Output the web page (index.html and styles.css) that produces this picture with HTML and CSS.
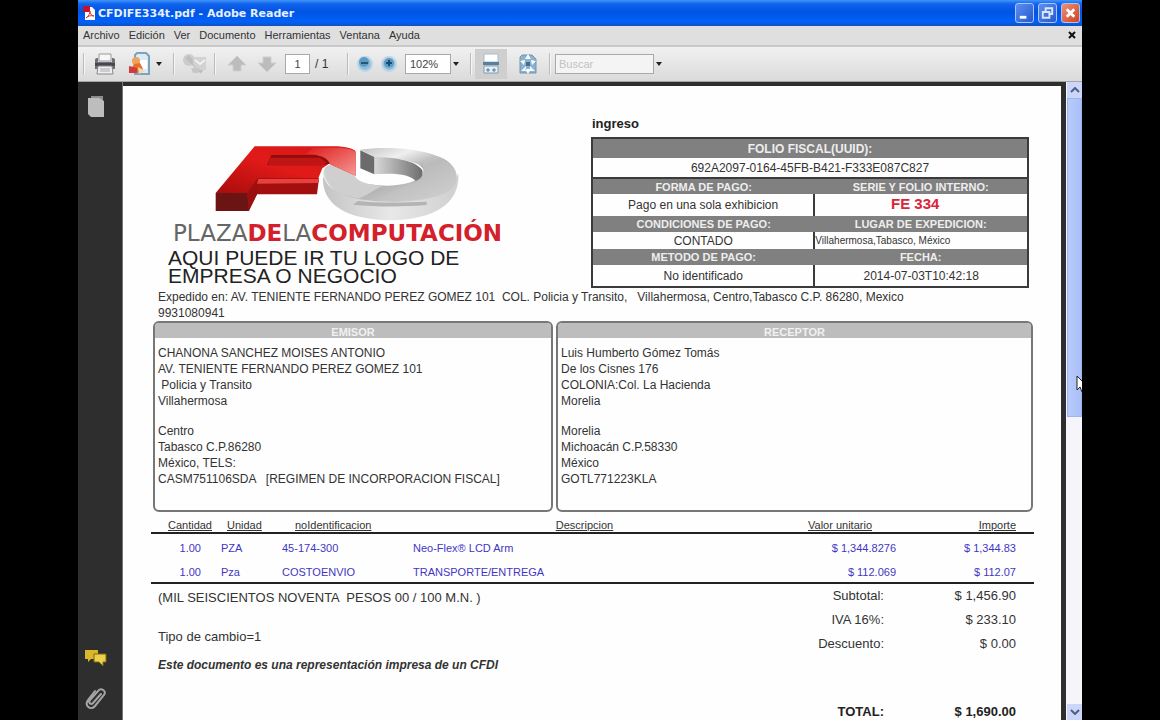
FILE: index.html
```html
<!doctype html>
<html lang="es">
<head>
<title>CFDIFE334t.pdf - Adobe Reader</title>
<meta charset="UTF-8">
<meta name="viewport" content="width=device-width, initial-scale=1.0">
<link rel="stylesheet" href="styles.css">
</head>
<body>

<div class="window">

  <header class="titlebar">
    <svg class="app-icon" width="13" height="15" viewBox="0 0 13 15">
      <path d="M2 1h7l3 3v10H2z" fill="#fff"/>
      <path d="M0 0h7v6H0z" fill="#c4122c"/>
      <path d="M3 12c3-2 4-5 4-7c0 3 2 5 4 5c-3-1-6 0-8 2z" fill="none" stroke="#d33" stroke-width="1"/>
    </svg>
    <span class="title">CFDIFE334t.pdf - Adobe Reader</span>
    <div class="win-buttons">
      <button type="button" aria-label="Minimizar">
        <svg width="18" height="18" viewBox="0 0 18 18"><path d="M4 12h7v3H4z" fill="#fff"/></svg>
      </button>
      <button type="button" aria-label="Restaurar">
        <svg width="18" height="18" viewBox="0 0 18 18" fill="none" stroke="#dbe6ff" stroke-width="2"><path d="M7 7V4h7v6h-3M4 8h7v6H4z"/></svg>
      </button>
      <button type="button" class="close" aria-label="Cerrar">
        <svg width="18" height="18" viewBox="0 0 18 18" stroke="#fff" stroke-width="3"><path d="M5 5l8 8M13 5l-8 8"/></svg>
      </button>
    </div>
  </header>

  <nav class="menubar">
    <button type="button">Archivo</button>
    <button type="button">Edición</button>
    <button type="button">Ver</button>
    <button type="button">Documento</button>
    <button type="button">Herramientas</button>
    <button type="button">Ventana</button>
    <button type="button">Ayuda</button>
    <button type="button" class="doc-close" aria-label="Cerrar documento">
      <svg width="8" height="8" viewBox="0 0 8 8" stroke="#111" stroke-width="2"><path d="M1 1l6 6M7 1l-6 6"/></svg>
    </button>
  </nav>

  <div class="toolbar">
    <span class="sep"></span>
    <button type="button" class="tool wide" aria-label="Imprimir">
      <svg width="24" height="24" viewBox="0 0 24 24">
        <path d="M6 2h12v7H6z" fill="#f7f7f7" stroke="#999"/>
        <path d="M2 8q0-2 2-2h1v4h14V6h1q2 0 2 2v9H2z" fill="#6d7177"/>
        <path d="M2 11h20v3H2z" fill="#45494f"/>
        <path d="M5 14h14l1 8H4z" fill="#eee" stroke="#888"/>
        <path d="M7 17h10M7 19h10" stroke="#aaa"/>
      </svg>
    </button>
    <button type="button" class="tool" aria-label="Colaborar">
      <svg width="24" height="24" viewBox="0 0 24 24">
        <path d="M9 1h9l3 3v18H7V3z" fill="#dcebf5" stroke="#7ba3bd" stroke-width="2"/>
        <path d="M11 8h8v9h-8z" fill="#fff"/>
        <circle cx="8" cy="9" r="4" fill="#f0a35e"/>
        <path d="M2 19l4-7l6-1l3 6l-5 4z" fill="#e3702f"/>
        <path d="M1 14l8 2v5H1z" fill="#d23a40"/>
        <path d="M10 15l7 4l-6 3z" fill="#f4d7b4"/>
      </svg>
    </button>
    <svg class="caret" width="6" height="4" viewBox="0 0 6 4"><path d="M0 0h6L3 4z"/></svg>
    <span class="sep far"></span>
    <button type="button" class="tool wide" aria-label="Firmar" disabled>
      <svg width="26" height="24" viewBox="0 0 26 24">
        <circle cx="7" cy="8" r="6" fill="#ccc"/>
        <path d="M5 5l15 15" stroke="#bdbdbd" stroke-width="4"/>
        <path d="M11 5h13v13h-8l-5-6z" fill="#d2d2d2"/>
        <path d="M13 8l5 4l5-4" fill="none" stroke="#f2f2f2" stroke-width="2"/>
        <path d="M9 16h9l-2 5h-5z" fill="#c6c6c6"/>
      </svg>
    </button>
    <span class="sep"></span>
    <button type="button" class="tool page-nav" aria-label="Página anterior" disabled>
      <svg width="20" height="18" viewBox="0 0 20 18"><path d="M10 1l9 9h-5v6H6v-6H1z" fill="#bcbcbc" stroke="#cfcfcf"/></svg>
    </button>
    <button type="button" class="tool page-nav" aria-label="Página siguiente" disabled>
      <svg width="20" height="18" viewBox="0 0 20 18"><path d="M10 17l9-9h-5V2H6v6H1z" fill="#bcbcbc" stroke="#cfcfcf"/></svg>
    </button>
    <input class="page-number" type="text" value="1" aria-label="Página">
    <span class="page-count">/ 1</span>
    <span class="sep"></span>
    <button type="button" class="tool zoom" aria-label="Reducir">
      <svg width="18" height="18" viewBox="0 0 18 18">
        <circle cx="9" cy="9" r="7" fill="#8fbfdd" stroke="#bcd6e6" stroke-width="2"/>
        <circle cx="8" cy="7" r="5" fill="#5e9cc4"/>
        <path d="M5 8h7" stroke="#24577c" stroke-width="2"/>
      </svg>
    </button>
    <button type="button" class="tool zoom" aria-label="Ampliar">
      <svg width="18" height="18" viewBox="0 0 18 18">
        <circle cx="9" cy="9" r="7" fill="#8fbfdd" stroke="#bcd6e6" stroke-width="2"/>
        <circle cx="9" cy="8" r="5" fill="#5e9cc4"/>
        <path d="M6 8h6M9 5v6" stroke="#1c4c72" stroke-width="2"/>
      </svg>
    </button>
    <select class="zoom-level" aria-label="Zoom">
      <option>102%</option>
    </select>
    <svg class="caret" width="6" height="4" viewBox="0 0 6 4"><path d="M0 0h6L3 4z"/></svg>
    <span class="sep far"></span>
    <button type="button" class="tool active" aria-label="Desplazamiento">
      <svg width="18" height="22" viewBox="0 0 18 22">
        <path d="M2 1h14v8H2z" fill="#fff" stroke="#a8bccb"/>
        <path d="M1 9h16v3H1z" fill="#57809d"/>
        <path d="M2 13h14v7H2z" fill="#e9f1f7" stroke="#7f9db3"/>
        <path d="M4 17h4M10 17h4M6 15v4M12 15v4" stroke="#54799a"/>
      </svg>
    </button>
    <button type="button" class="tool fit" aria-label="Ajustar página">
      <svg width="20" height="22" viewBox="0 0 20 22">
        <path d="M4 2h10l4 4v14H2V4z" fill="#8eb2cb" stroke="#6f95b0"/>
        <path d="M10 1l3 5H7zM10 21l3-5H7zM2 8l5-1l-1 5zM18 8l-5-1l1 5zM3 18l5-5v5zM17 18l-5-5v5z" fill="#f4fafd"/>
        <path d="M8 9h4v4H8z" fill="#3f6f8f"/>
      </svg>
    </button>
    <span class="sep"></span>
    <input class="search" type="text" placeholder="Buscar" aria-label="Buscar">
    <svg class="caret" width="6" height="4" viewBox="0 0 6 4"><path d="M0 0h6L3 4z"/></svg>
  </div>

  <div class="viewer">

    <aside class="sidebar">
      <button type="button" aria-label="Páginas">
        <svg width="20" height="24" viewBox="0 0 20 24">
          <path d="M5 1h12v17l-3 2H5z" fill="#8d8d8d"/>
          <path d="M2 3h11l5 3v16H5l-3-3z" fill="#bdbdbd"/>
        </svg>
      </button>
      <button type="button" class="comments" aria-label="Comentarios">
        <svg width="24" height="20" viewBox="0 0 24 20">
          <path d="M1 2h13v9H7l-3 3v-3H1z" fill="#d9b62c"/>
          <path d="M10 6h12v8h-3v4l-4-4h-5z" fill="#ecd04a" stroke="#7c6614"/>
        </svg>
      </button>
      <button type="button" aria-label="Archivos adjuntos">
        <svg width="24" height="26" viewBox="0 0 24 26" fill="none" stroke="#a4a4a4" stroke-width="2" stroke-linecap="round">
          <path d="M17 8l-8 9c-2 2-5 0-3-3l8-9c3-4 9 0 6 4l-9 11c-4 5-11 0-7-6l7-9"/>
        </svg>
      </button>
    </aside>

    <main class="page">

      <section class="head">
        <div class="brand">
          <svg class="logo" width="250" height="80" viewBox="220 40 750 240">
            <defs>
              <linearGradient id="red" x1="0" y1="1" x2="1" y2="0">
                <stop offset="0" stop-color="#a80c0c"/>
                <stop offset=".5" stop-color="#e01a18"/>
                <stop offset="1" stop-color="#d81818"/>
              </linearGradient>
              <linearGradient id="tip" x1="0" y1="0" x2="1" y2="1">
                <stop offset="0" stop-color="#e01c1c"/>
                <stop offset="1" stop-color="#f59a96"/>
              </linearGradient>
              <linearGradient id="ring" x1="0" y1="0" x2="1" y2="1">
                <stop offset="0" stop-color="#a5a5a5"/>
                <stop offset=".35" stop-color="#efefef"/>
                <stop offset=".55" stop-color="#b0b0b0"/>
                <stop offset="1" stop-color="#e6e6e6"/>
              </linearGradient>
              <linearGradient id="side" x1="0" y1="0" x2="1" y2="0">
                <stop offset="0" stop-color="#c4c4c4"/>
                <stop offset=".5" stop-color="#e8e8e8"/>
                <stop offset="1" stop-color="#cfcfcf"/>
              </linearGradient>
              <linearGradient id="inner" x1="0" y1="0" x2="1" y2="0">
                <stop offset="0" stop-color="#d8d8d8"/>
                <stop offset="1" stop-color="#6d6d6d"/>
              </linearGradient>
            </defs>
            <path d="M550 140C545 225 620 270 750 272C880 270 962 225 956 130C945 175 870 195 750 195C640 195 570 180 550 140z" fill="url(#side)"/>
            <path d="M662 60C730 50 830 55 890 78C960 100 970 160 920 190C860 222 740 222 650 207C580 190 545 160 552 122C560 105 572 104 585 108L645 136C640 155 680 166 740 168C830 168 880 130 835 104C800 88 750 82 705 82z" fill="url(#ring)"/>
            <path d="M705 82C760 82 830 92 848 122C852 140 842 148 828 154C815 135 765 128 705 134z" fill="url(#inner)"/>
            <path d="M560 118L590 106L645 136C648 152 675 166 730 168C700 180 690 195 655 207C590 195 545 160 560 118z" fill="#cfcfcf"/>
            <path d="M850 100L885 78C960 100 970 160 920 190C880 208 820 214 750 214C700 190 800 176 850 150z" fill="#c3c3c3" opacity=".6"/>
            <path d="M655 214C720 222 800 218 862 216L860 226C790 232 715 232 640 225z" fill="#b4b4b4"/>
            <path d="M662 62l42 20v52l-42-18z" fill="#6b6b6b"/>
            <path d="M345 50H580C620 50 645 58 648 66V138L568 102L548 116L535 148H352L322 190H228z" fill="url(#red)"/>
            <path d="M520 54H590C625 54 645 62 648 68V138L568 102C560 84 540 74 500 72z" fill="url(#tip)"/>
            <path d="M395 76H520C548 78 566 88 570 102L545 106H382z" fill="#8f0d0d"/>
            <path d="M392 84H540L560 98L548 108H384z" fill="#c01515"/>
            <path d="M352 146H538L532 194H352L325 244L320 190z" fill="#a30f0f"/>
            <path d="M356 148H538L536 160L352 162z" fill="#e8403c"/>
            <path d="M228 190H322L328 244H228z" fill="#6b1414"/>
            <path d="M322 190L352 165V194L328 244z" fill="#9a1010"/>
          </svg>
          <p class="brand-name"><span>PLAZA</span><b>DE</b><span>LA</span><b>COMPUTACIÓN</b></p>
          <p class="brand-note">AQUI PUEDE IR TU LOGO DE<br>EMPRESA O NEGOCIO</p>
        </div>

        <div class="folio">
          <h1>ingreso</h1>
          <table>
            <colgroup>
              <col class="left-col">
              <col>
            </colgroup>
            <tbody>
              <tr class="label first"><th colspan="2">FOLIO FISCAL(UUID):</th></tr>
              <tr class="value uuid"><td colspan="2">692A2097-0164-45FB-B421-F333E087C827</td></tr>
              <tr class="label"><th>FORMA DE PAGO:</th><th>SERIE Y FOLIO INTERNO:</th></tr>
              <tr class="value"><td>Pago en una sola exhibicion</td><td class="serie">FE 334</td></tr>
              <tr class="label"><th>CONDICIONES DE PAGO:</th><th>LUGAR DE EXPEDICION:</th></tr>
              <tr class="value short"><td>CONTADO</td><td class="place">Villahermosa,Tabasco, México</td></tr>
              <tr class="label"><th>METODO DE PAGO:</th><th>FECHA:</th></tr>
              <tr class="value"><td>No identificado</td><td>2014-07-03T10:42:18</td></tr>
            </tbody>
          </table>
        </div>
      </section>

      <p class="issued">Expedido en: AV. TENIENTE FERNANDO PEREZ GOMEZ 101  COL. Policia y Transito,   Villahermosa, Centro,Tabasco C.P. 86280, Mexico
9931080941</p>

      <section class="parties">
        <div class="party">
          <h2>EMISOR</h2>
          <p>CHANONA SANCHEZ MOISES ANTONIO
AV. TENIENTE FERNANDO PEREZ GOMEZ 101
 Policia y Transito
Villahermosa</p>
          <p>Centro
Tabasco C.P.86280
México, TELS:
CASM751106SDA   [REGIMEN DE INCORPORACION FISCAL]</p>
        </div>
        <div class="party">
          <h2>RECEPTOR</h2>
          <p>Luis Humberto Gómez Tomás
De los Cisnes 176
COLONIA:Col. La Hacienda
Morelia</p>
          <p>Morelia
Michoacán C.P.58330
México
GOTL771223KLA</p>
        </div>
      </section>

      <table class="items">
        <thead>
          <tr>
            <th class="qty">Cantidad</th>
            <th class="unit">Unidad</th>
            <th class="code">noIdentificacion</th>
            <th class="desc">Descripcion</th>
            <th class="price">Valor unitario</th>
            <th class="amount">Importe</th>
          </tr>
        </thead>
        <tbody>
          <tr>
            <td class="qty">1.00</td>
            <td class="unit">PZA</td>
            <td class="code">45-174-300</td>
            <td class="desc">Neo-Flex® LCD Arm</td>
            <td class="price">$ 1,344.8276</td>
            <td class="amount">$ 1,344.83</td>
          </tr>
          <tr>
            <td class="qty">1.00</td>
            <td class="unit">Pza</td>
            <td class="code">COSTOENVIO</td>
            <td class="desc">TRANSPORTE/ENTREGA</td>
            <td class="price">$ 112.069</td>
            <td class="amount">$ 112.07</td>
          </tr>
        </tbody>
      </table>

      <section class="summary">
        <div class="notes">
          <p>(MIL SEISCIENTOS NOVENTA  PESOS 00 / 100 M.N. )</p>
          <p class="rate">Tipo de cambio=1</p>
          <p class="legend">Este documento es una representación impresa de un CFDI</p>
        </div>
        <dl class="totals">
          <div><dt>Subtotal:</dt><dd>$ 1,456.90</dd></div>
          <div><dt>IVA 16%:</dt><dd>$ 233.10</dd></div>
          <div><dt>Descuento:</dt><dd>$ 0.00</dd></div>
          <div class="total"><dt>TOTAL:</dt><dd>$ 1,690.00</dd></div>
        </dl>
      </section>

    </main>

    <div class="scrollbar">
      <button type="button" aria-label="Subir">
        <svg width="10" height="6" viewBox="0 0 10 6" fill="none" stroke="#4d6185" stroke-width="2"><path d="M1 5l4-4l4 4"/></svg>
      </button>
      <div class="thumb"></div>
      <button type="button" class="down" aria-label="Bajar">
        <svg width="10" height="6" viewBox="0 0 10 6" fill="none" stroke="#4d6185" stroke-width="2"><path d="M1 1l4 4l4-4"/></svg>
      </button>
      <svg class="pointer" width="12" height="18" viewBox="0 0 12 18"><path d="M1 1v14l3-3l2 5l3-1l-2-5h4z" fill="#fff" stroke="#222"/></svg>
    </div>

  </div>
</div>

</body>
</html>
```

FILE: styles.css
```css
* {
  box-sizing: border-box;
}

body {
  margin: 0;
  background: #000;
  font-family: "Liberation Sans", Arial, sans-serif;
  font-size: 12px;
  color: #333;
}

h1, h2, p, dl, dd {
  margin: 0;
}

button {
  display: flex;
  align-items: center;
  justify-content: center;
  padding: 0;
  border: 0;
  background: none;
  font: inherit;
  color: inherit;
}

.window {
  display: flex;
  flex-direction: column;
  height: 100vh;
  margin: 0 78px;
  overflow: hidden;
}

/* title bar */
.titlebar {
  display: flex;
  flex: none;
  align-items: center;
  height: 26px;
  padding: 0 2px 0 5px;
  background: linear-gradient(#3f95fb, #1163ec 4px, #0054e3 12px, #0061fa 22px, #1550b8);
}

.title {
  margin-left: 2px;
  font-family: "DejaVu Sans", sans-serif;
  font-size: 11px;
  font-weight: bold;
  color: #e6f0ff;
}

.win-buttons {
  display: flex;
  gap: 4px;
  margin-left: auto;
}

.win-buttons button {
  width: 19px;
  height: 20px;
  border: 1px solid #a9c4f8;
  border-radius: 3px;
  background: linear-gradient(135deg, #5d8ff0, #2458cf);
}

.win-buttons .close {
  background: linear-gradient(135deg, #ee9077, #d04220);
}

/* menu */
.menubar {
  display: flex;
  flex: none;
  align-items: center;
  gap: 9px;
  height: 19px;
  padding: 0 6px 2px 5px;
  background: #dfdfdf;
  font-size: 11px;
}

.doc-close {
  margin-left: auto;
}

/* toolbar */
.toolbar {
  display: flex;
  flex: none;
  align-items: center;
  height: 37px;
  padding: 0 5px;
  border-top: 2px solid #c9c9c9;
  border-bottom: 1px solid #a5a5a5;
  background: linear-gradient(#f1f1f1, #dadada);
}

.sep {
  width: 2px;
  height: 22px;
  border-left: 1px solid #bbb;
  border-right: 1px solid #f6f6f6;
}

.far {
  margin-left: 11px;
}

.tool {
  width: 32px;
  height: 30px;
}

.wide {
  width: 39px;
}

.page-nav {
  width: 30px;
}

.wide + .sep + .page-nav {
  margin-left: 6px;
}

.zoom {
  width: 24px;
}

.sep + .zoom {
  margin-left: 4px;
}

.caret {
  fill: #222;
}

.page-number, .zoom-level, .search {
  height: 20px;
  margin: 0;
  border: 1px solid #a9a9a9;
  border-radius: 0;
  background: #fff;
  font-family: inherit;
  font-size: 11px;
  color: #444;
}

.page-number {
  width: 25px;
  margin-left: 3px;
  padding: 0;
  text-align: center;
}

.page-count {
  width: 37px;
  padding-left: 5px;
}

.zoom-level {
  appearance: none;
  width: 46px;
  margin: 0 2px 0 4px;
  padding: 0 4px;
}

.active {
  margin-left: 3px;
  background: #cfcfcf;
}

.fit {
  width: 42px;
}

.search {
  width: 99px;
  margin: 0 2px 0 4px;
  padding: 0 3px;
  background: #f4f4f4;
}

.search::placeholder {
  color: #c2c2c2;
}

/* document area */
.viewer {
  display: flex;
  flex: 1;
  min-height: 0;
  background: #2e2e2e;
}

.sidebar {
  display: flex;
  flex: none;
  flex-direction: column;
  width: 45px;
  padding: 13px 9px 8px 0;
  border-right: 1px solid #777;
}

.comments {
  margin: auto 0 18px;
}

.page {
  flex: 1;
  min-width: 0;
  margin: 4px 5px 0 0;
  padding: 0 27px 0 28px;
  background: #fefefe;
}

.head {
  display: flex;
  justify-content: space-between;
  height: 203px;
  padding-right: 5px;
}

.brand {
  padding: 57px 0 0 17px;
}

.logo {
  display: block;
  margin-left: 45px;
}

.brand-name {
  padding-left: 5px;
  font-family: "DejaVu Sans", sans-serif;
  font-size: 23px;
  line-height: 20px;
  color: #666;
}

.brand-name b {
  color: #d3202b;
}

.brand-note {
  padding-top: 6px;
  font-size: 21px;
  line-height: 18px;
  color: #222;
}

.folio {
  flex: 0 1 438px;
  padding-top: 29px;
}

.folio h1 {
  padding-left: 1px;
  font-size: 13px;
  line-height: 18px;
  margin-bottom: 4px;
  color: #222;
}

.folio table {
  width: 100%;
  table-layout: fixed;
  border: 2px solid #3b3b3b;
  border-collapse: collapse;
}

.left-col {
  width: 51%;
}

.folio th, .folio td {
  padding: 0;
  text-align: center;
}

.label {
  height: 16px;
  background: #808080;
  font-size: 11px;
  line-height: 14px;
  color: #eee;
}

.first {
  height: 20px;
  font-size: 12px;
}

.value {
  height: 22px;
  line-height: 16px;
}

.value td + td {
  border-left: 2px solid #3b3b3b;
}

.uuid {
  height: 20px;
  border-bottom: 2px solid #3b3b3b;
}

.short {
  height: 17px;
}

.folio .serie {
  padding: 0 12px 3px 0;
  font-size: 15px;
  font-weight: bold;
  color: #dc2438;
}

.folio .place {
  font-size: 10px;
  text-align: left;
}

.issued {
  padding-left: 7px;
  font-size: 12px;
  line-height: 16px;
  white-space: pre-wrap;
}

/* issuer and receiver */
.parties {
  display: grid;
  grid-template-columns: 400fr 477fr;
  gap: 3px;
  padding: 0 1px 0 2px;
}

.party {
  height: 191px;
  border: 2px solid #777;
  border-radius: 6px;
  overflow: hidden;
}

.party h2 {
  height: 15px;
  background: #bdbdbd;
  font-size: 11px;
  line-height: 18px;
  text-align: center;
  color: #f1f1f1;
}

.party p {
  padding: 7px 3px;
  line-height: 16px;
  white-space: pre-wrap;
}

/* items */
.items {
  width: 100%;
  margin-top: 6px;
  table-layout: fixed;
  border-collapse: collapse;
  border-bottom: 2px solid #222;
  font-size: 11px;
  color: #4336c4;
}

.items thead {
  border-bottom: 2px solid #222;
  color: #333;
}

.items th {
  height: 14px;
  padding: 0;
  font-weight: normal;
  line-height: 14px;
  text-decoration: underline;
  text-align: left;
}

.items td {
  height: 22px;
  padding: 0;
}

.items tbody tr:first-child td {
  height: 28px;
}

.items .qty {
  width: 64px;
  padding-right: 14px;
  text-align: right;
}

.items th.qty {
  padding-right: 3px;
}

.items .unit {
  width: 58px;
  padding-left: 6px;
}

.items th.unit {
  padding-left: 12px;
}

.items .code {
  width: 132px;
  padding-left: 9px;
}

.items th.code {
  padding-left: 22px;
}

.items .desc {
  padding-left: 8px;
}

.items th.desc {
  padding-left: 0;
  text-align: center;
}

.items .price {
  width: 138px;
  padding-right: 6px;
  text-align: right;
}

.items th.price {
  padding-right: 30px;
}

.items .amount {
  width: 132px;
  padding-right: 18px;
  text-align: right;
}

/* notes and totals */
.summary {
  display: flex;
  justify-content: space-between;
  padding: 0 18px 0 7px;
  font-size: 13px;
}

.notes p {
  padding-top: 5px;
  line-height: 18px;
  white-space: pre-wrap;
}

.notes .rate {
  padding-top: 21px;
}

.notes .legend {
  padding-top: 10px;
  font-size: 12px;
  font-weight: bold;
  font-style: italic;
}

.totals div {
  display: flex;
  line-height: 24px;
}

.totals dt {
  width: 80px;
  text-align: right;
}

.totals dd {
  width: 132px;
  text-align: right;
}

.totals .total {
  padding-top: 44px;
  font-weight: bold;
  color: #222;
}

/* scrollbar */
.scrollbar {
  position: relative;
  display: flex;
  flex: none;
  flex-direction: column;
  width: 16px;
  padding-left: 1px;
  overflow: hidden;
  background: #f6f6fa;
}

.scrollbar button {
  height: 16px;
  background: #cbd6fa;
}

.thumb {
  flex: 0 0 50%;
  border: 1px solid #9db4ef;
  background: linear-gradient(to right, #b9cbfb, #a9bff8);
}

.scrollbar .down {
  margin-top: auto;
}

.pointer {
  position: absolute;
  top: 293px;
  left: 10px;
}
```
